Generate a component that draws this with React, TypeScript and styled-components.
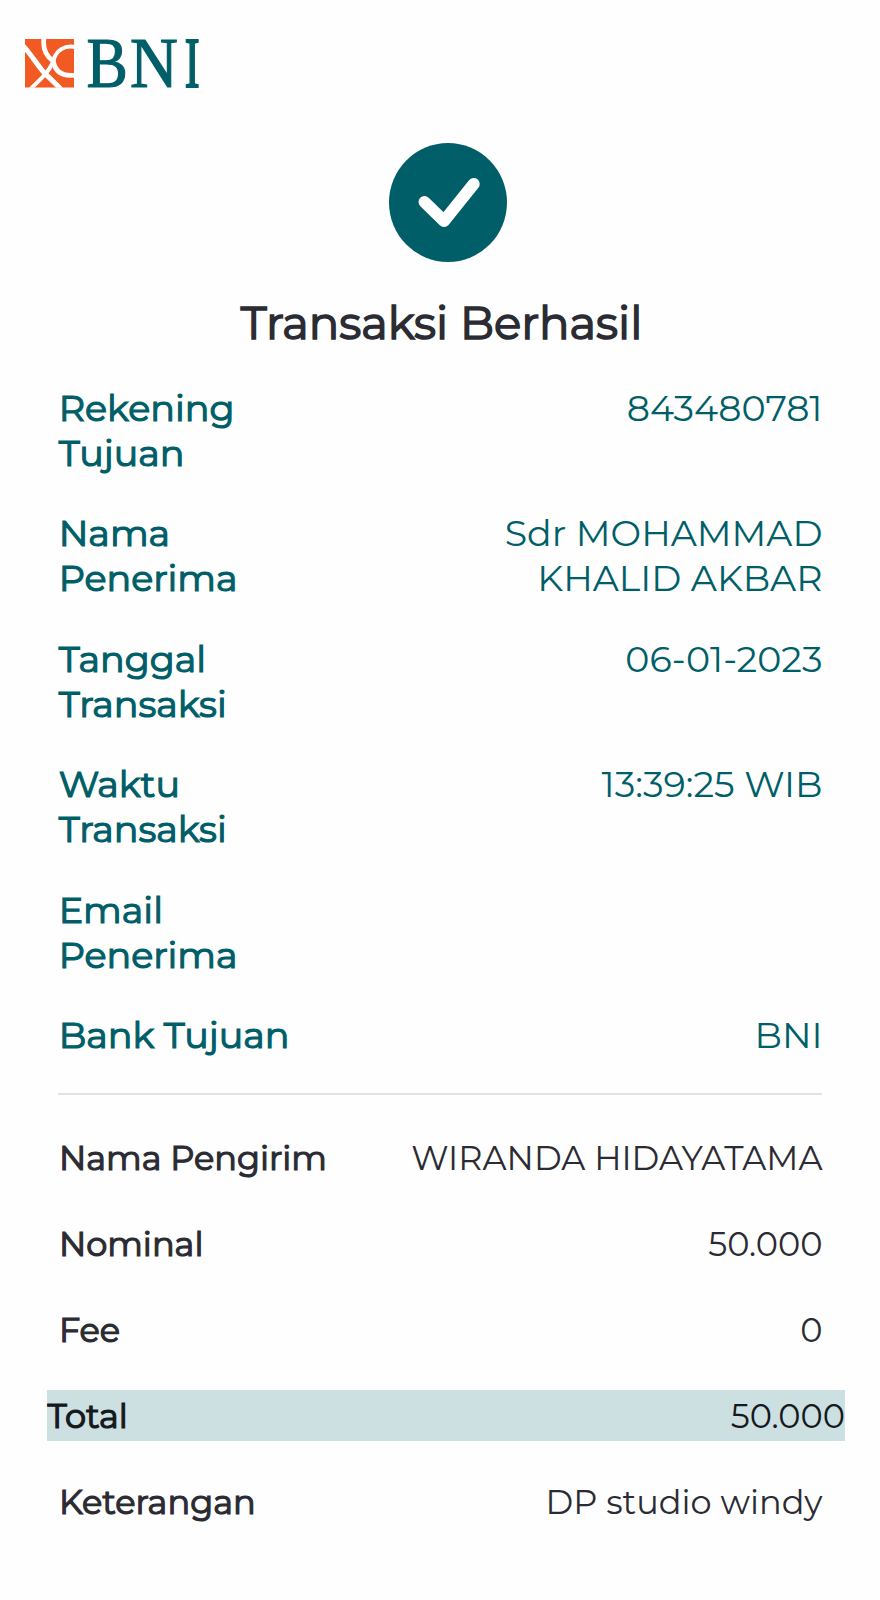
import React from 'react';
import styled, { createGlobalStyle } from 'styled-components';

const Global = createGlobalStyle`
  * { box-sizing: border-box; }
  html, body { margin: 0; background: #fefefe; }
`;

const teal = '#005e68';
const ink = '#2b2b33';

const Page = styled.main`
  display: flex;
  flex-direction: column;
  width: 880px;
  height: 1600px;
  overflow: hidden;
  font-family: Montserrat, Inter, sans-serif;
  background: #fefefe;
`;

const Header = styled.header`
  display: flex;
  padding: 39px 0 0 25px;
  height: 142.6px;
`;

const Logo = styled.svg`
  display: block;
  width: 180px;
  height: 54px;
  overflow: visible;
`;

const Status = styled.section`
  display: flex;
  flex-direction: column;
  align-items: center;
`;

const CheckIcon = styled.svg`
  display: block;
  width: 118px;
  height: 119px;
  margin-left: 15px;
`;

const Title = styled.h1`
  margin: 33.2px 0 0 3px;
  font-size: 45.1px;
  line-height: 56px;
  font-weight: 400;
  color: ${ink};
  -webkit-text-stroke: 1.5px ${ink};
`;

const Details = styled.dl`
  display: flex;
  flex-direction: column;
  gap: 35.9px;
  margin: 35px 57.5px 0 58.7px;
  font-size: 36.5px;
  line-height: 44.8px;
  color: ${teal};
`;

const DetailRow = styled.div`
  display: flex;
  justify-content: space-between;
`;

const Label = styled.dt<{ $wrapAt?: number }>`
  width: ${p => (p.$wrapAt ? `${p.$wrapAt}px` : 'auto')};
  -webkit-text-stroke: 1.2px currentColor;
`;

const Value = styled.dd<{ $wrapAt?: number }>`
  max-width: ${p => p.$wrapAt ?? 420}px;
  margin: 0;
  text-align: right;
`;

const DetailValue = styled(Value)`
  font-size: 36.4px;
`;

const Divider = styled.hr`
  width: 764px;
  height: 2px;
  margin: 35.4px 0 0 58px;
  border: 0;
  background: #e2e2e3;
`;

const Summary = styled.dl`
  display: flex;
  flex-direction: column;
  gap: 35.5px;
  margin: 36.4px 35px 0 47px;
  font-size: 33.6px;
  line-height: 41px;
  color: ${ink};
`;

const SummaryRow = styled.div<{ $highlight?: boolean }>`
  display: flex;
  justify-content: space-between;
  padding: ${p => (p.$highlight ? '4.8px 0 4.8px 0.6px' : '4.8px 22.5px 4.8px 11.9px')};
  background: ${p => (p.$highlight ? '#ccdfe1' : 'transparent')};
  color: ${p => (p.$highlight ? '#15191d' : ink)};
`;

const details = [
  { label: 'Rekening Tujuan', value: '843480781' },
  { label: 'Nama Penerima', value: 'Sdr MOHAMMAD KHALID AKBAR' },
  { label: 'Tanggal Transaksi', value: '06-01-2023' },
  { label: 'Waktu Transaksi', value: '13:39:25 WIB' },
  { label: 'Email Penerima', value: '' },
  { label: 'Bank Tujuan', value: 'BNI' },
];

const summary = [
  { label: 'Nama Pengirim', value: 'WIRANDA HIDAYATAMA' },
  { label: 'Nominal', value: '50.000' },
  { label: 'Fee', value: '0' },
  { label: 'Total', value: '50.000', highlight: true },
  { label: 'Keterangan', value: 'DP studio windy' },
];

function BankLogo() {
  return (
    <Logo viewBox="0 0 180 54" role="img" aria-label="BNI">
      <svg width="49" height="48.7" viewBox="0 0 146 146" preserveAspectRatio="none">
        <rect width="146" height="146" fill="#f15a23" />
        <g fill="none" stroke="#fefefe">
          <path d="M-8 18 C14 40 32 72 56 100 C74 118 90 132 108 152" strokeWidth="15" />
          <path d="M57 -8 C50 34 66 54 84 66 C90 98 112 114 152 108" strokeWidth="14" />
          <path d="M12 154 C48 118 68 104 84 68 C90 34 120 16 152 25" strokeWidth="12" />
        </g>
      </svg>
      <g fontFamily="'Liberation Serif', serif" fontSize="72" fill={teal} stroke={teal}>
        <text transform="translate(61.5 48) scale(0.86 1)" strokeWidth="1.2">B</text>
        <text transform="translate(104.9 48) scale(0.92 1)" strokeWidth="1.2">N</text>
        <text transform="translate(159.8 48) scale(0.62 1)" strokeWidth="2">I</text>
      </g>
    </Logo>
  );
}

export default function App() {
  return (
    <Page>
      <Global />
      <Header>
        <BankLogo />
      </Header>
      <Status>
        <CheckIcon viewBox="0 0 118 119">
          <ellipse cx="59" cy="59.5" rx="59" ry="59.5" fill={teal} />
          <path d="M35.5 59 L55 78 L84.7 41" fill="none" stroke="#fff" strokeWidth="12" strokeLinecap="round" strokeLinejoin="round" />
        </CheckIcon>
        <Title>Transaksi Berhasil</Title>
      </Status>
      <Details>
        {details.map(d => (
          <DetailRow key={d.label}>
            <Label $wrapAt={240}>{d.label}</Label>
            <DetailValue $wrapAt={360}>{d.value}</DetailValue>
          </DetailRow>
        ))}
      </Details>
      <Divider />
      <Summary>
        {summary.map(s => (
          <SummaryRow key={s.label} $highlight={s.highlight}>
            <Label>{s.label}</Label>
            <Value>{s.value}</Value>
          </SummaryRow>
        ))}
      </Summary>
    </Page>
  );
}
